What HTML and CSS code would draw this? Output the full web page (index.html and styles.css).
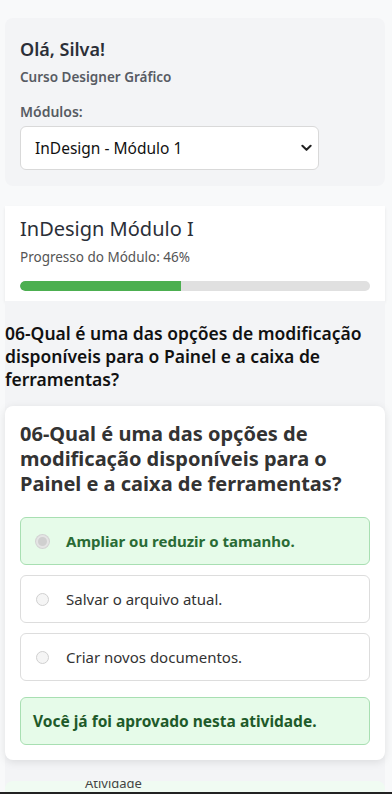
FILE: index.html
```html
<!DOCTYPE html>
<html lang="pt">
<head>
<meta charset="utf-8">
<title>Curso</title>
<link rel="stylesheet" href="styles.css">
</head>
<body>
<div class="page">
  <header class="welcome">
    <h2 class="hello">Olá, Silva!</h2>
    <p class="course">Curso Designer Gráfico</p>
    <label class="mod-label" for="mod">Módulos:</label>
    <div class="select">
      <span>InDesign - Módulo 1</span>
      <svg class="chev" viewBox="0 0 12 8" width="11" height="8"><path d="M1.5 1.5 L6 6 L10.5 1.5" fill="none" stroke="#222" stroke-width="2.2" stroke-linecap="round" stroke-linejoin="round"/></svg>
    </div>
  </header>

  <section class="module">
    <h3 class="module-title">InDesign Módulo I</h3>
    <p class="progress-text">Progresso do Módulo: 46%</p>
    <div class="bar"><div class="fill" style="width:46%"></div></div>
  </section>

  <main class="content">
    <h2 class="q-outer">06-Qual é uma das opções de modificação disponíveis para o Painel e a caixa de ferramentas?</h2>
    <div class="q-card">
      <h3 class="q-title">06-Qual é uma das opções de modificação disponíveis para o Painel e a caixa de ferramentas?</h3>
      <div class="opt correct"><span class="radio filled"></span><span>Ampliar ou reduzir o tamanho.</span></div>
      <div class="opt"><span class="radio"></span><span>Salvar o arquivo atual.</span></div>
      <div class="opt"><span class="radio"></span><span>Criar novos documentos.</span></div>
      <div class="approved">Você já foi aprovado nesta atividade.</div>
    </div>
    <div class="next"><span>Atividade</span></div>
  </main>
</div>
<div class="edge"></div>
</body>
</html>
```
FILE: styles.css
```css
* { box-sizing: border-box; }
html, body { margin: 0; padding: 0; }
body {
  background: #f8f9fa;
  font-family: "Noto Sans", "Open Sans", sans-serif;
  color: #333;
  overflow: hidden;
  height: 794px;
}
.page {
  width: 380px;
  margin-left: 5px;
  padding-top: 18px;
}
.welcome {
  background: #f3f4f6;
  border-radius: 8px;
  padding: 20px 15px 16px;
}
.hello {
  margin: 0;
  font-size: 18px;
  font-weight: 600;
  line-height: 22px;
  color: #2b2f38;
}
.course {
  margin: 8px 0 0;
  font-size: 13.5px;
  font-weight: 600;
  line-height: 18px;
  color: #575b63;
}
.mod-label {
  display: block;
  margin-top: 17px;
  font-size: 14px;
  font-weight: 600;
  line-height: 18px;
  color: #575b63;
}
.select {
  margin-top: 5px;
  width: 299px;
  height: 44px;
  background: #fff;
  border: 1px solid #d9d9d9;
  border-radius: 6px;
  display: flex;
  align-items: center;
  justify-content: space-between;
  padding: 0 6px 0 14px;
  font-size: 15.5px;
  color: #111;
}
.module {
  margin-top: 20px;
  background: #fff;
  padding: 10px 15px 10px;
  box-shadow: 0 2px 3px rgba(0,0,0,0.08);
}
.module-title {
  margin: 0;
  font-size: 20px;
  font-weight: 400;
  line-height: 26px;
  color: #2b2f38;
}
.progress-text {
  margin: 6px 0 0;
  font-size: 13.5px;
  line-height: 18px;
  color: #555;
}
.bar {
  margin-top: 15px;
  height: 10px;
  border-radius: 5px;
  background: #e0e0e0;
  overflow: hidden;
}
.fill {
  height: 100%;
  background: #4caf50;
  border-radius: 5px 0 0 5px;
}
.content {
  background: #f3f4f6;
  padding-top: 21px;
}
.q-outer {
  margin: 0;
  font-size: 17.5px;
  font-weight: 600;
  line-height: 23px;
  color: #111;
}
.q-card {
  margin-top: 15px;
  background: #fff;
  border-radius: 8px;
  box-shadow: 0 2px 8px rgba(0,0,0,0.1);
  padding: 15px 15px 15px;
}
.q-title {
  margin: 0 0 21px;
  font-size: 20px;
  font-weight: 700;
  line-height: 25px;
  color: #333;
}
.opt {
  display: flex;
  align-items: center;
  gap: 17px;
  height: 48px;
  margin-bottom: 10px;
  padding: 0 15px;
  border: 1px solid #ddd;
  border-radius: 6px;
  font-size: 15px;
  color: #333;
}
.opt.correct {
  background: #e6fbe9;
  border-color: #a8dfb2;
  color: #2a6b35;
  font-weight: 700;
}
.radio {
  width: 13px;
  height: 13px;
  border-radius: 50%;
  border: 1px solid #d0d0d0;
  background: #f5f5f5;
  flex: none;
}
.radio.filled {
  background: #cfcfcf;
  border: 2px solid #e4e4e4;
  box-shadow: 0 0 0 1px #d3d3d3;
}
.approved {
  margin-top: 16px;
  height: 48px;
  display: flex;
  align-items: center;
  padding: 0 12px;
  background: #e6fbe9;
  border: 1px solid #a8dfb2;
  border-radius: 6px;
  font-size: 15.5px;
  font-weight: 700;
  color: #1e5a2a;
}
.next {
  margin-top: 21px;
  height: 20px;
  background: #f0fbf2;
  border-radius: 8px 8px 0 0;
  overflow: hidden;
  padding-left: 80px;
}
.next span {
  display: block;
  margin-top: -6px;
  font-size: 13px;
  line-height: 16px;
  color: #444;
}
.edge {
  position: fixed;
  left: 0;
  right: 0;
  bottom: 0;
  height: 2px;
  background: #222;
}
```
